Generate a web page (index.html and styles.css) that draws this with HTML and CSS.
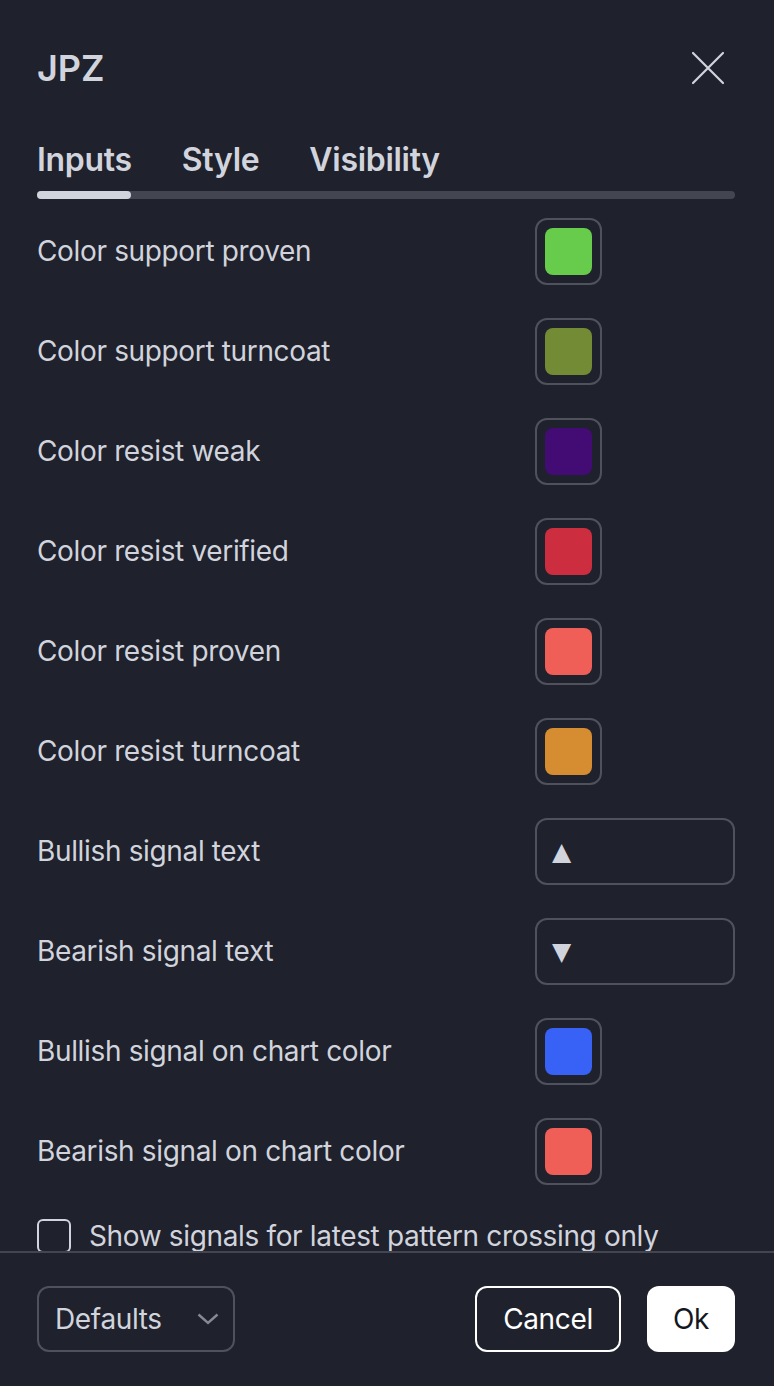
FILE: index.html
```html
<!DOCTYPE html>
<html lang="en">
<head>
    <meta charset="UTF-8">
    <meta name="viewport" content="width=device-width, initial-scale=1.0">
    <title>JPZ settings</title>
    <link rel="stylesheet" href="styles.css">
</head>
<body>

    <div class="dialog">
        <div class="dialog-header">
            <h1>JPZ</h1>
            <button class="close-btn" aria-label="Close">
                <svg width="34" height="34" viewBox="0 0 34 34">
                    <path d="M2 2 L32 32 M32 2 L2 32" stroke="#d1d4dc" stroke-width="2.2" stroke-linecap="round" fill="none"/>
                </svg>
            </button>
        </div>

        <div class="tabs">
            <span class="tab active">Inputs</span>
            <span class="tab">Style</span>
            <span class="tab">Visibility</span>
        </div>
        <div class="tab-track"><div class="tab-thumb"></div></div>

        <div class="dialog-body">
            <div class="row">
                <span class="label">Color support proven</span>
                <span class="swatch"><span class="swatch-color" style="background:#67cc4b"></span></span>
            </div>
            <div class="row">
                <span class="label">Color support turncoat</span>
                <span class="swatch"><span class="swatch-color" style="background:#738b35"></span></span>
            </div>
            <div class="row">
                <span class="label">Color resist weak</span>
                <span class="swatch"><span class="swatch-color" style="background:#430b74"></span></span>
            </div>
            <div class="row">
                <span class="label">Color resist verified</span>
                <span class="swatch"><span class="swatch-color" style="background:#cc2e40"></span></span>
            </div>
            <div class="row">
                <span class="label">Color resist proven</span>
                <span class="swatch"><span class="swatch-color" style="background:#ef5f58"></span></span>
            </div>
            <div class="row">
                <span class="label">Color resist turncoat</span>
                <span class="swatch"><span class="swatch-color" style="background:#d68d31"></span></span>
            </div>
            <div class="row">
                <span class="label">Bullish signal text</span>
                <span class="text-input">&#9650;</span>
            </div>
            <div class="row">
                <span class="label">Bearish signal text</span>
                <span class="text-input">&#9660;</span>
            </div>
            <div class="row">
                <span class="label">Bullish signal on chart color</span>
                <span class="swatch"><span class="swatch-color" style="background:#3861f6"></span></span>
            </div>
            <div class="row">
                <span class="label">Bearish signal on chart color</span>
                <span class="swatch"><span class="swatch-color" style="background:#ef5f58"></span></span>
            </div>
            <label class="check-row">
                <span class="checkbox"></span>
                <span class="label">Show signals for latest pattern crossing only</span>
            </label>
        </div>

        <div class="dialog-footer">
            <div class="select">
                <span>Defaults</span>
                <svg width="22" height="12" viewBox="0 0 22 12">
                    <path d="M1.5 1.5 L11 10 L20.5 1.5" stroke="#868993" stroke-width="2.4" fill="none"/>
                </svg>
            </div>
            <div class="footer-buttons">
                <button class="btn btn-cancel">Cancel</button>
                <button class="btn btn-ok">Ok</button>
            </div>
        </div>
    </div>

</body>
</html>
```

FILE: styles.css
```css
html, body {
    margin: 0;
    padding: 0;
}
body {
    background-color: #1f212c;
    color: #d1d4dc;
    font-family: Inter, "Noto Sans", sans-serif;
    overflow: hidden;
}
.dialog {
    height: 1386px;
    display: flex;
    flex-direction: column;
}
.dialog-header {
    height: 136px;
    padding: 0 39px 0 37px;
    display: flex;
    align-items: center;
    justify-content: space-between;
}
.dialog-header h1 {
    margin: 0;
    font-size: 36px;
    font-weight: 600;
    color: #d1d4dc;
}
.close-btn {
    background: none;
    border: none;
    padding: 0;
    width: 34px;
    height: 34px;
    margin-right: 10px;
    cursor: pointer;
}
.tabs {
    display: flex;
    gap: 50px;
    padding: 0 37px;
    height: 48px;
    line-height: 48px;
    margin-bottom: 7px;
}
.tab {
    font-size: 32px;
    font-weight: 600;
    letter-spacing: -0.3px;
    color: #d1d4dc;
}
.tab-track {
    margin: 0 39px 0 37px;
    height: 8px;
    border-radius: 4px;
    background-color: #434651;
}
.tab-thumb {
    width: 94px;
    height: 8px;
    border-radius: 4px;
    background-color: #d1d4dc;
}
.dialog-body {
    flex: 1;
    overflow: hidden;
    padding: 2px 39px 0 37px;
}
.row {
    height: 100px;
    display: flex;
    align-items: center;
    justify-content: space-between;
}
.label {
    font-size: 28px;
    letter-spacing: -0.35px;
    color: #d1d4dc;
}
.swatch {
    box-sizing: border-box;
    width: 67px;
    height: 67px;
    margin-right: 133px;
    padding: 8px;
    border: 2px solid #4f525d;
    border-radius: 12px;
}
.swatch-color {
    display: block;
    width: 47px;
    height: 47px;
    border-radius: 8px;
}
.text-input {
    box-sizing: border-box;
    width: 200px;
    height: 67px;
    border: 2px solid #4f525d;
    border-radius: 12px;
    padding-left: 15px;
    display: flex;
    align-items: center;
    font-family: "DejaVu Sans", sans-serif;
    font-size: 25px;
    color: #d1d4dc;
}
.check-row {
    display: flex;
    align-items: center;
    gap: 18px;
    margin-top: 18px;
}
.checkbox {
    box-sizing: border-box;
    width: 34px;
    height: 34px;
    border: 2px solid #d1d4dc;
    border-radius: 6px;
}
.dialog-footer {
    height: 135px;
    border-top: 2px solid #434651;
    padding: 33px 39px 0 37px;
    box-sizing: border-box;
    display: flex;
    justify-content: space-between;
    align-items: flex-start;
    background-color: #1f212c;
}
.select {
    box-sizing: border-box;
    width: 198px;
    height: 66px;
    border: 2px solid #4f525d;
    border-radius: 12px;
    padding: 0 14px 0 16px;
    display: flex;
    align-items: center;
    justify-content: space-between;
    font-size: 28px;
    letter-spacing: -0.35px;
    color: #d1d4dc;
}
.footer-buttons {
    display: flex;
    gap: 26px;
}
.btn {
    box-sizing: border-box;
    height: 66px;
    border-radius: 12px;
    font-family: Inter, "Noto Sans", sans-serif;
    font-size: 28px;
    letter-spacing: -0.35px;
    cursor: pointer;
}
.btn-cancel {
    width: 146px;
    background: none;
    border: 2px solid #ffffff;
    color: #ffffff;
}
.btn-ok {
    width: 88px;
    background-color: #ffffff;
    border: none;
    color: #131722;
}
```
